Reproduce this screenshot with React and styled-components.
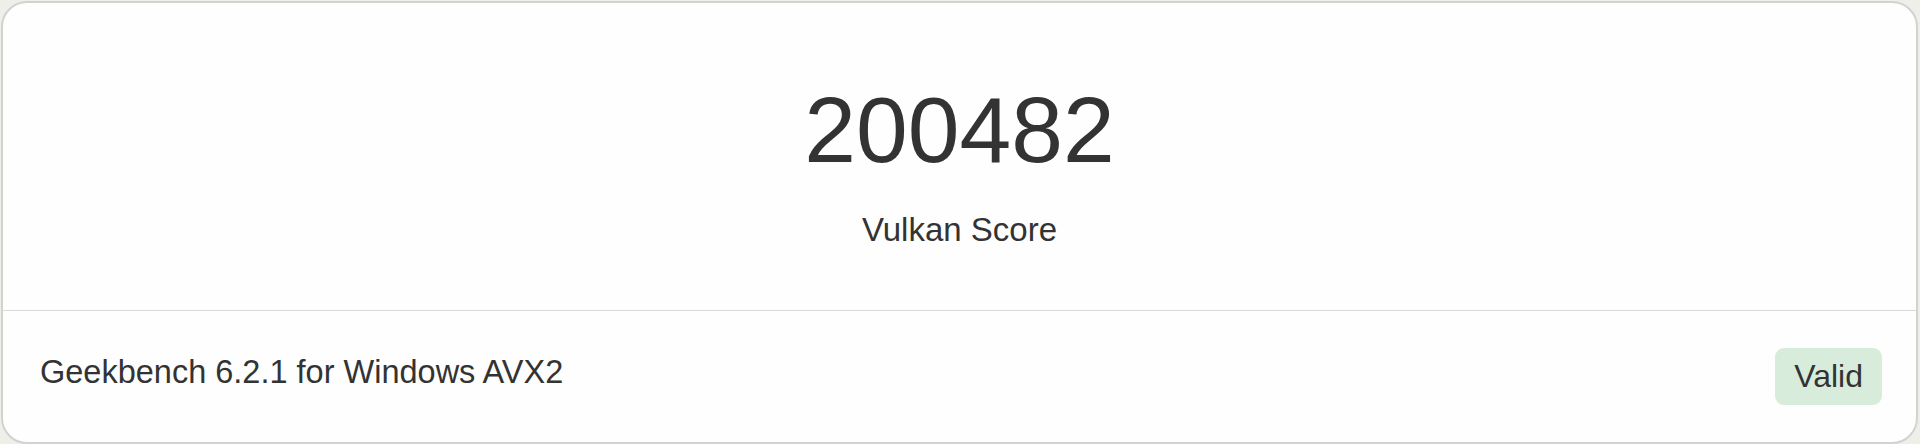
import React from "react";
import styled, { createGlobalStyle } from "styled-components";

const GlobalStyle = createGlobalStyle`
    html, body {
        margin: 0;
        padding: 0;
        background: #efefea;
        font-family: "Liberation Sans", Arial, sans-serif;
        color: #333333;
    }
`

const score = {
    value: 200482,
    label: "Vulkan Score",
    version: "Geekbench 6.2.1 for Windows AVX2",
    status: "Valid",
};

const App = () => {
    return (
        <>
            <GlobalStyle />
            <Page>
                <Card>
                    <ScoreSection>
                        <ScoreValue>{score.value}</ScoreValue>
                        <ScoreLabel>{score.label}</ScoreLabel>
                    </ScoreSection>
                    <Footer>
                        <Version>{score.version}</Version>
                        <Badge>{score.status}</Badge>
                    </Footer>
                </Card>
            </Page>
        </>
    )
}

export default App;


const Page = styled.div`
    padding: 1px 2px 1px 1px;
`

const Card = styled.div`
    background: #fefefe;
    border: 2px solid #d2d2d0;
    border-radius: 26px;
    overflow: hidden;
`

const ScoreSection = styled.div`
    display: flex;
    flex-direction: column;
    align-items: center;
    padding: 72px 0 56px;
    border-bottom: 1px solid #d9d9d9;
`

const ScoreValue = styled.div`
    font-size: 93px;
    line-height: 1.2;
`

const ScoreLabel = styled.div`
    margin-top: 19px;
    font-size: 33px;
    line-height: 48px;
`

const Footer = styled.div`
    display: flex;
    justify-content: space-between;
    align-items: flex-start;
    padding: 37px 34px 37px 37px;
`

const Version = styled.div`
    font-size: 32.5px;
    line-height: 48px;
`

const Badge = styled.span`
    background: #d8ecdc;
    border-radius: 9px;
    padding: 9.5px 19px;
    font-size: 32px;
    line-height: 1.2;
`
